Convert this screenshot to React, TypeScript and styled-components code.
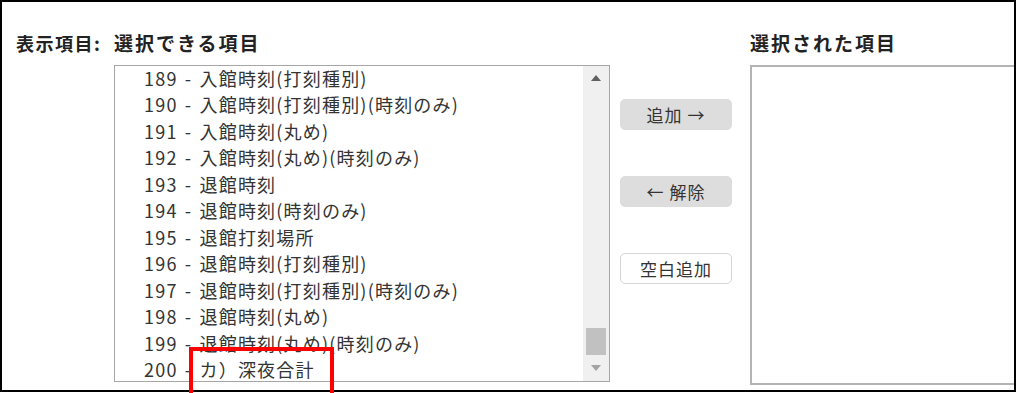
import React from "react";
import styled, { createGlobalStyle } from "styled-components";

const Global = createGlobalStyle`
  html, body { margin: 0; padding: 0; background: #fff; }
  body { font-family: "Noto Sans CJK JP", "Noto Sans", sans-serif; }
  * { box-sizing: border-box; }
`;

const Shot = styled.div`
  position: relative;
  width: 1016px;
  height: 393px;
  overflow: hidden;
  background: #fff;
`;

const Frame = styled.div`
  width: 1016px;
  height: 392px;
  border: 2px solid #000;
  display: flex;
  align-items: flex-start;
  padding: 29px 0 0 14px;
  overflow: hidden;
  color: #222;
`;

const Label = styled.div`
  width: 98px;
  flex: none;
  font-size: 18px;
  font-weight: 700;
  line-height: 24px;
  letter-spacing: 1.5px;
`;

const Column = styled.div<{ $w: number }>`
  width: ${(p) => p.$w}px;
  flex: none;
  display: flex;
  flex-direction: column;
`;

const Title = styled.div`
  font-size: 19px;
  font-weight: 700;
  line-height: 24px;
  letter-spacing: 2px;
  margin-bottom: 10px;
  white-space: nowrap;
`;

const ListBox = styled.div`
  height: 317px;
  border: 1px solid #a6a6a6;
  display: flex;
  background: #fff;
  overflow: hidden;
`;

const Items = styled.ul`
  flex: 1;
  margin: 0;
  padding: 0 0 0 29px;
  list-style: none;
  overflow: hidden;
`;

const Item = styled.li`
  height: 26.5px;
  line-height: 26.5px;
  font-size: 18px;
  letter-spacing: 1.2px;
  word-spacing: 2px;
  color: #333;
  white-space: nowrap;
  &:first-child { margin-top: -1.5px; }
`;

const ScrollBar = styled.div`
  width: 26px;
  flex: none;
  background: #f0f0f0;
  display: flex;
  flex-direction: column;
`;

const Arrow = styled.div<{ $h: number }>`
  height: ${(p) => p.$h}px;
  flex: none;
  display: flex;
  align-items: center;
  justify-content: center;
`;

const Track = styled.div`
  flex: 1;
  display: flex;
  flex-direction: column;
  justify-content: flex-end;
  padding: 0 3px 0 3px;
`;

const Thumb = styled.div`
  height: 27px;
  background: #c1c1c1;
`;

const ButtonCol = styled.div`
  width: 112px;
  flex: none;
  margin: 68px 18px 0 10px;
  display: flex;
  flex-direction: column;
  gap: 46px;
`;

const Button = styled.button<{ $plain?: boolean }>`
  height: 31px;
  width: 112px;
  border-radius: 5px;
  border: 1px solid ${(p) => (p.$plain ? "#d6d6d6" : "#dcdcdc")};
  background: ${(p) => (p.$plain ? "#fff" : "#dddddd")};
  color: #333;
  font-family: "Noto Sans CJK JP", "Noto Sans", sans-serif;
  font-size: 17px;
  letter-spacing: 1px;
  line-height: 29px;
  padding: 0;
  text-align: center;
`;

const RightBox = styled.div`
  width: 290px;
  height: 320px;
  border: 2px solid #b4b4b4;
  border-right: none;
  background: #fff;
`;

const Highlight = styled.div`
  position: absolute;
  left: 189px;
  top: 347px;
  width: 145px;
  height: 52px;
  border: 4px solid #ff0000;
`;

const items = [
  "189 - 入館時刻(打刻種別)",
  "190 - 入館時刻(打刻種別)(時刻のみ)",
  "191 - 入館時刻(丸め)",
  "192 - 入館時刻(丸め)(時刻のみ)",
  "193 - 退館時刻",
  "194 - 退館時刻(時刻のみ)",
  "195 - 退館打刻場所",
  "196 - 退館時刻(打刻種別)",
  "197 - 退館時刻(打刻種別)(時刻のみ)",
  "198 - 退館時刻(丸め)",
  "199 - 退館時刻(丸め)(時刻のみ)",
  "200 - カ）深夜合計",
];

const Tri = ({ up, color }: { up?: boolean; color: string }) => (
  <svg width="10" height="6" viewBox="0 0 10 6">
    <path d={up ? "M0 6 L5 0 L10 6 Z" : "M0 0 L10 0 L5 6 Z"} fill={color} />
  </svg>
);

export default function App() {
  return (
    <Shot>
      <Global />
      <Frame>
        <Label>表示項目:</Label>
        <Column $w={496}>
          <Title>選択できる項目</Title>
          <ListBox>
            <Items>
              {items.map((t) => (
                <Item key={t}>{t}</Item>
              ))}
            </Items>
            <ScrollBar>
              <Arrow $h={24}>
                <Tri up color="#606060" />
              </Arrow>
              <Track>
                <Thumb />
              </Track>
              <Arrow $h={26}>
                <Tri color="#a3a3a3" />
              </Arrow>
            </ScrollBar>
          </ListBox>
        </Column>
        <ButtonCol>
          <Button>追加 →</Button>
          <Button>← 解除</Button>
          <Button $plain>空白追加</Button>
        </ButtonCol>
        <Column $w={290}>
          <Title>選択された項目</Title>
          <RightBox />
        </Column>
      </Frame>
      <Highlight />
    </Shot>
  );
}
